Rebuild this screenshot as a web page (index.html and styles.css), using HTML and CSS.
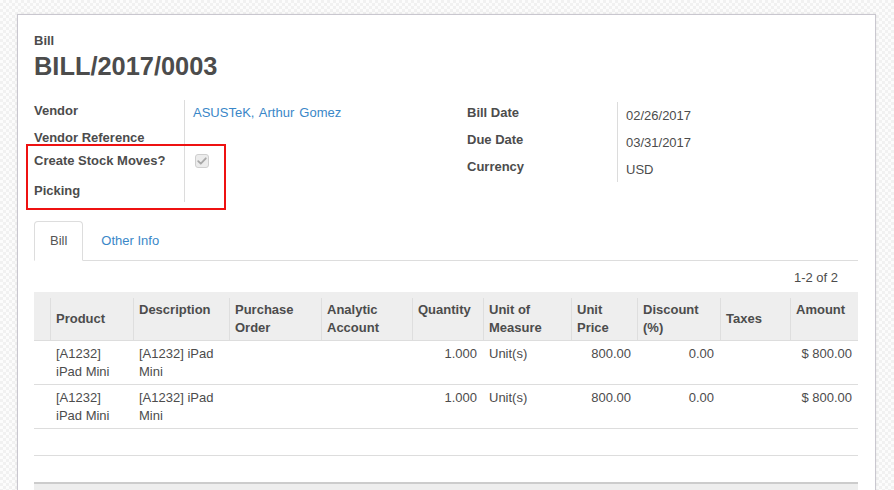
FILE: index.html
```html
<!DOCTYPE html>
<html>
<head>
<meta charset="utf-8">
<link rel="stylesheet" href="styles.css">
</head>
<body>
<div class="sheet">
  <div class="title-label">Bill</div>
  <h1 class="title">BILL/2017/0003</h1>

  <div class="groups">
    <div class="group group-left">
      <div class="row r1"><div class="lbl">Vendor</div><div class="val val-link"><a class="link vendor-link">ASUSTeK, Arthur Gomez</a></div></div>
      <div class="row r2"><div class="lbl">Vendor Reference</div><div class="val"></div></div>
      <div class="row r3"><div class="lbl">Create Stock Moves?</div><div class="val val-check">
        <span class="checkbox"><svg width="12" height="12" viewBox="0 0 12 12"><path d="M2.2 6.2 L4.8 8.7 L9.8 3.3" fill="none" stroke="#a8a8a8" stroke-width="1.8" stroke-linecap="round" stroke-linejoin="round"/></svg></span>
      </div></div>
      <div class="row r4"><div class="lbl">Picking</div><div class="val"></div></div>
      <div class="highlight"></div>
    </div>
    <div class="group group-right">
      <div class="row rr"><div class="lbl">Bill Date</div><div class="val val-date">02/26/2017</div></div>
      <div class="row rr"><div class="lbl">Due Date</div><div class="val val-date">03/31/2017</div></div>
      <div class="row rr rlast"><div class="lbl">Currency</div><div class="val val-date">USD</div></div>
    </div>
  </div>

  <ul class="tabs">
    <li class="tab active">Bill</li>
    <li class="tab"><a class="link">Other Info</a></li>
  </ul>

  <div class="pager">1-2 of 2</div>

  <table class="lines">
    <colgroup>
      <col class="c-handle"><col class="c-product"><col class="c-desc"><col class="c-po"><col class="c-analytic"><col class="c-qty"><col class="c-uom"><col class="c-price"><col class="c-disc"><col class="c-taxes"><col class="c-amount">
    </colgroup>
    <thead>
      <tr>
        <th class="first"></th>
        <th class="mid">Product</th>
        <th>Description</th>
        <th>Purchase Order</th>
        <th>Analytic Account</th>
        <th>Quantity</th>
        <th>Unit of Measure</th>
        <th>Unit Price</th>
        <th>Discount (%)</th>
        <th class="mid">Taxes</th>
        <th>Amount</th>
      </tr>
    </thead>
    <tbody>
      <tr>
        <td></td>
        <td>[A1232] iPad Mini</td>
        <td>[A1232] iPad Mini</td>
        <td></td>
        <td></td>
        <td class="num">1.000</td>
        <td>Unit(s)</td>
        <td class="num">800.00</td>
        <td class="num">0.00</td>
        <td></td>
        <td class="num">$ 800.00</td>
      </tr>
      <tr>
        <td></td>
        <td>[A1232] iPad Mini</td>
        <td>[A1232] iPad Mini</td>
        <td></td>
        <td></td>
        <td class="num">1.000</td>
        <td>Unit(s)</td>
        <td class="num">800.00</td>
        <td class="num">0.00</td>
        <td></td>
        <td class="num">$ 800.00</td>
      </tr>
      <tr class="empty"><td colspan="11"></td></tr>
      <tr class="empty"><td colspan="11"></td></tr>
    </tbody>
    <tfoot>
      <tr><td colspan="11"></td></tr>
    </tfoot>
  </table>
</div>
</body>
</html>
```
FILE: styles.css
```css
html, body {
  margin: 0;
  padding: 0;
  overflow: hidden;
  height: 490px;
}
body {
  font-family: "Liberation Sans", Arial, sans-serif;
  font-size: 13px;
  line-height: 18px;
  color: #4c4c4c;
  background-color: #f8f8f8;
  background-image: conic-gradient(#f1f1f1 25%, #fcfcfc 0 50%, #f1f1f1 0 75%, #fcfcfc 0);
  background-size: 6px 6px;
}
.sheet {
  position: relative;
  margin: 14px 0 0 17px;
  width: 824px;
  min-height: 600px;
  padding: 17px 17px 0 16px;
  background: #fff;
  border: 1px solid #c9c7cf;
  box-shadow: 0 0 3px rgba(0, 0, 0, 0.08);
}
.title-label {
  font-weight: bold;
  line-height: 18px;
}
.title {
  margin: 2px 0 0;
  font-size: 25.4px;
  line-height: 28px;
  font-weight: bold;
  color: #4c4c4c;
}
.groups {
  display: grid;
  grid-template-columns: 433px 1fr;
  margin-top: 20px;
}
.group {
  position: relative;
}
.group-right {
  margin-top: 2px;
}
.row {
  display: grid;
  grid-template-columns: 151px 1fr;
}
.lbl {
  font-weight: bold;
  border-right: 1px solid #dcdcdc;
  padding-top: 2px;
  white-space: nowrap;
}
.val {
  padding-left: 8px;
}
.r1 { height: 27px; }
.r2 { height: 23px; }
.r3 { height: 30px; }
.r4 { height: 22px; }
.rr { height: 27px; }
.rlast { height: 26px; }
.val-link { padding-top: 4px; }
.val-date { padding-top: 5px; }
.val-check { padding-top: 4px; }
.link {
  color: #3a87c8;
  text-decoration: none;
}
.vendor-link {
  word-spacing: 1.5px;
}
.checkbox {
  display: flex;
  align-items: center;
  justify-content: center;
  width: 12px;
  height: 12px;
  margin-left: 2px;
  border: 1px solid #cfcfcf;
  border-radius: 3px;
  background: #ececec;
}
.highlight {
  position: absolute;
  left: -8px;
  top: 44px;
  width: 196px;
  height: 62px;
  border: 2px solid #ee1111;
  pointer-events: none;
}
.tabs {
  display: flex;
  list-style: none;
  margin: 19px 0 0;
  padding: 0;
  border-bottom: 1px solid #dddddd;
}
.tab {
  padding: 10px 15px;
  margin-right: 2px;
  margin-bottom: -1px;
  border: 1px solid transparent;
  border-radius: 4px 4px 0 0;
  line-height: 18px;
  color: #555;
}
.tab.active {
  background: #fff;
  border-color: #dddddd #dddddd transparent;
}
.pager {
  text-align: right;
  padding: 8px 20px 5px 0;
  line-height: 18px;
}
.lines {
  width: 824px;
  table-layout: fixed;
  border-collapse: collapse;
  border-spacing: 0;
}
.c-handle { width: 16px; }
.c-product { width: 83px; }
.c-desc { width: 96px; }
.c-po { width: 92px; }
.c-analytic { width: 91px; }
.c-qty { width: 71px; }
.c-uom { width: 88px; }
.c-price { width: 66px; }
.c-disc { width: 83px; }
.c-taxes { width: 70px; }
.c-amount { width: 68px; }
.lines th {
  background: linear-gradient(#dedede, #dedede) left 6px / 1px 100% no-repeat, #eeeeee;
  text-align: left;
  vertical-align: top;
  font-weight: bold;
  padding: 9px 6px 3px;
  line-height: 18px;
}
.lines th.first {
  background: #eeeeee;
  padding: 0;
}
.lines th.mid {
  vertical-align: middle;
}
.lines td {
  border-top: 1px solid #dddddd;
  padding: 4px 6px 3px;
  vertical-align: top;
  line-height: 18px;
}
.lines td.num {
  text-align: right;
}
.lines tr.empty td {
  height: 26px;
  padding: 0;
}
.lines tfoot td {
  border-top: 2px solid #cccccc;
  background: #eeeeee;
  height: 30px;
  padding: 0;
}
```
